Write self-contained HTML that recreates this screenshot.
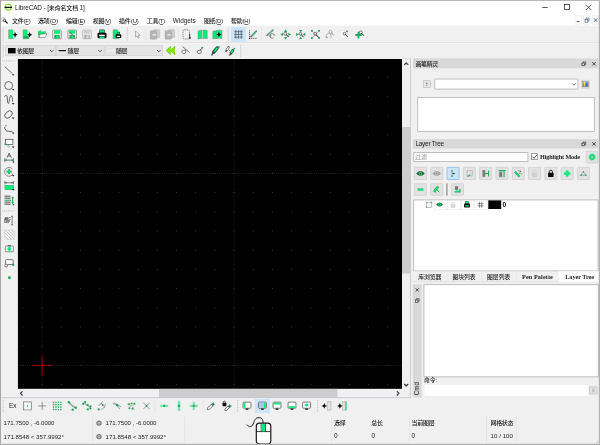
<!DOCTYPE html>
<html lang="zh-CN">
<head>
<meta charset="utf-8">
<title>LibreCAD - [未命名文档 1]</title>
<style>
html,body{margin:0;padding:0;background:#f0f0f0;}
body{width:600px;height:445px;overflow:hidden;}
#w{display:block;width:600px;height:445px;background:#f0f0f0;font-family:"Liberation Sans","Noto Sans CJK SC",sans-serif;font-size:6px;fill:#1c1c1c;filter:blur(0.3px);}
#w svg{overflow:visible;}
#w text{white-space:pre;}
#w .u{text-decoration:underline;text-decoration-thickness:.45px;text-underline-offset:.9px;}
</style>
</head>
<body>
<svg id="w" width="600" height="445" viewBox="0 0 600 445">
<rect x="0" y="0" width="600" height="25.6" fill="#fff"/>
<svg x="4.1" y="3.1" width="8.4" height="8.4" viewBox="0 0 20 20"><path d="M2.6 2.6 L5 5 M17.4 2.6 L15 5 M2.6 17.4 L5 15 M17.4 17.4 L15 15" stroke="#86d02a" stroke-width="1.8"/><circle cx="10" cy="10" r="7.2" fill="#fff" stroke="#86d02a" stroke-width="2.6"/><rect x="1" y="8.7" width="18" height="2.7" rx=".4" fill="#111"/></svg>
<text x="15" y="9.6" font-size="6" font-weight="500" letter-spacing="-0.149"><tspan font-size="6.48">LibreCAD - [</tspan>未命名文档 <tspan font-size="6.48">1]</tspan></text>
<svg x="535" y="0" width="65" height="15" viewBox="535 0 65 15"><path d="M542.3 7.5 H547.7" stroke="#111" stroke-width=".7" fill="none"/><rect x="564.5" y="4.5" width="5" height="5" fill="none" stroke="#111" stroke-width=".7"/><path d="M586 4.8 L591.2 10 M591.2 4.8 L586 10" stroke="#111" stroke-width=".7" fill="none"/></svg>
<svg x="1.8" y="17.6" width="6" height="6" viewBox="0 0 20 20"><rect x="0.5" y="0.5" width="10" height="12" fill="#fff" stroke="#8a8a8a" stroke-width="1.2"/><circle cx="9" cy="9" r="4" fill="#fff" stroke="#222" stroke-width="2.4"/><path d="M12.4 12.4 L18 18" stroke="#111" stroke-width="4" stroke-linecap="round"/></svg>
<text x="12" y="23" font-size="6" font-weight="500" letter-spacing="-0.237">文件<tspan font-size="6">(</tspan><tspan class="u"><tspan font-size="6">F</tspan></tspan><tspan font-size="6">)</tspan></text>
<text x="38" y="23" font-size="6" font-weight="500" letter-spacing="-0.138">选项<tspan font-size="6">(</tspan><tspan class="u"><tspan font-size="6">O</tspan></tspan><tspan font-size="6">)</tspan></text>
<text x="66" y="23" font-size="6" font-weight="500" letter-spacing="-0.206">编辑<tspan font-size="6">(</tspan><tspan class="u"><tspan font-size="6">E</tspan></tspan><tspan font-size="6">)</tspan></text>
<text x="92.8" y="23" font-size="6" font-weight="500" letter-spacing="-0.326">视图<tspan font-size="6">(</tspan><tspan class="u"><tspan font-size="6">V</tspan></tspan><tspan font-size="6">)</tspan></text>
<text x="119" y="23" font-size="6" font-weight="500" letter-spacing="-0.132">插件<tspan font-size="6">(</tspan><tspan class="u"><tspan font-size="6">U</tspan></tspan><tspan font-size="6">)</tspan></text>
<text x="146.8" y="23" font-size="6" font-weight="500" letter-spacing="-0.338">工具<tspan font-size="6">(</tspan><tspan class="u"><tspan font-size="6">T</tspan></tspan><tspan font-size="6">)</tspan></text>
<text x="172.8" y="23.14" font-size="6.4" letter-spacing="-0.013">Widgets</text>
<text x="203.9" y="23" font-size="6" font-weight="500" letter-spacing="-0.272">图纸<tspan font-size="6">(</tspan><tspan class="u"><tspan font-size="6">D</tspan></tspan><tspan font-size="6">)</tspan></text>
<text x="231" y="23" font-size="6" font-weight="500" letter-spacing="-0.232">帮助<tspan font-size="6">(</tspan><tspan class="u"><tspan font-size="6">H</tspan></tspan><tspan font-size="6">)</tspan></text>
<rect x="574.95" y="15.85" width="6.2" height="8.3" fill="#fff" stroke="#e4e4e4" stroke-width="0.5"/>
<rect x="583.45" y="15.85" width="6.5" height="8.3" fill="#fff" stroke="#e4e4e4" stroke-width="0.5"/>
<rect x="592.45" y="15.85" width="6.3" height="8.3" fill="#fff" stroke="#e4e4e4" stroke-width="0.5"/>
<svg x="570" y="14" width="30" height="12" viewBox="570 14 30 12"><path d="M576.6 21.6 H579.6" stroke="#3a4a78" stroke-width=".9"/><rect x="585" y="19.6" width="2.8" height="2.6" fill="#fff" stroke="#3a4a78" stroke-width=".6"/><path d="M586 19.4 V18.2 H589 V21 H588" fill="none" stroke="#3a4a78" stroke-width=".6"/><path d="M594 18.4 L597.2 21.8 M597.2 18.4 L594 21.8" stroke="#3a4a78" stroke-width=".8"/></svg>
<rect x="0" y="42.2" width="600" height="0.7" fill="#dcdcdc"/>
<rect x="0" y="42.9" width="600" height="0.4" fill="#fafafa"/>
<svg x="2.2" y="28" width="2" height="13" viewBox="0 0 2 13"><path d="M1 0 V13" stroke="#a0a0a0" stroke-width=".8" stroke-dasharray=".7 1.1"/></svg>
<rect x="230.9" y="27" width="15.1" height="14.8" fill="#cce4f7"/>
<svg x="7.8" y="29.4" width="10" height="10" viewBox="0 0 20 20"><path d="M1.5 0.8 H9.5 L13 4.5 V18.6 H1.5 Z" fill="#00f07a" stroke="#8a8a8a" stroke-width="1"/><path d="M9.5 0.8 L13 4.5 V18.6 H10.5 V4 Z" fill="#fff" opacity=".85"/><path d="M14.6 5.200000000000001 L16.168 9.232000000000001 L20.2 10.8 L16.168 12.368 L14.6 16.4 L13.032 12.368 L9.0 10.8 L13.032 9.232000000000001 Z" fill="#000"/></svg>
<svg x="22.3" y="29.4" width="10" height="10" viewBox="0 0 20 20"><path d="M1.5 0.8 H9.5 L13 4.5 V18.6 H1.5 Z" fill="#00f07a" stroke="#8a8a8a" stroke-width="1"/><rect x="2" y="13.5" width="10.5" height="4.6" fill="#1fa85a"/><path d="M9.5 0.8 L13 4.5 V13 H10.5 V4 Z" fill="#fff" opacity=".85"/><path d="M14.6 5.200000000000001 L16.168 9.232000000000001 L20.2 10.8 L16.168 12.368 L14.6 16.4 L13.032 12.368 L9.0 10.8 L13.032 9.232000000000001 Z" fill="#000"/></svg>
<svg x="37.5" y="29.4" width="10" height="10" viewBox="0 0 20 20"><path d="M2 3.5 L7 2.5 L9 5 L16 4 L15.5 9 L2.5 11 Z" fill="#00f07a" stroke="#1fa85a" stroke-width=".8"/><path d="M2.5 16.5 L5.5 9.5 L19 8.5 L15 16.5 Z" fill="#fff" stroke="#555" stroke-width="1.1"/><path d="M2.2 4 V16.5" stroke="#1fa85a" stroke-width="1.2"/></svg>
<svg x="52" y="29.4" width="10" height="10" viewBox="0 0 20 20"><rect x="1.5" y="1.5" width="17" height="17" rx="1.2" fill="#f4f4f4" stroke="#6a6a6a" stroke-width="1.3"/><rect x="4" y="2" width="12" height="6.8" fill="#00f07a"/><rect x="4.5" y="11" width="11" height="7.2" fill="#1fa85a"/><rect x="8.5" y="12.2" width="5" height="5" fill="#00f07a"/></svg>
<svg x="67.2" y="29.4" width="10" height="10" viewBox="0 0 20 20"><rect x="1.5" y="1.5" width="17" height="17" rx="1.2" fill="#f4f4f4" stroke="#6a6a6a" stroke-width="1.3"/><rect x="4" y="2" width="12" height="6.8" fill="#00f07a"/><rect x="4.5" y="11" width="11" height="7.2" fill="#1fa85a"/><rect x="8.5" y="12.2" width="5" height="5" fill="#00f07a"/><path d="M5 5 L15 16" stroke="#444" stroke-width="2"/><path d="M6 6 L15 17" stroke="#ddd" stroke-width=".7"/></svg>
<svg x="82" y="29.4" width="10" height="10" viewBox="0 0 20 20"><rect x="1.5" y="1.5" width="17" height="17" rx="1.2" fill="#f2f2f2" stroke="#9c9c9c" stroke-width="1.3"/><rect x="4" y="2" width="12" height="6.8" fill="#d0d0d0"/><rect x="4.5" y="11" width="11" height="7.2" fill="#a8a8a8"/><rect x="8.5" y="12.2" width="5" height="5" fill="#d8d8d8"/></svg>
<svg x="97" y="29.4" width="10" height="10" viewBox="0 0 20 20"><rect x="5.5" y="1" width="9" height="6" fill="#00f07a" stroke="#0a0a0a" stroke-width="1"/><rect x="1" y="6.5" width="18" height="11" rx="2.5" fill="#0a0a0a"/><rect x="4.5" y="10.5" width="11" height="3.2" fill="#fff"/><rect x="5" y="14.6" width="10" height="3.6" fill="#00f07a"/></svg>
<svg x="111.8" y="29.4" width="10" height="10" viewBox="0 0 20 20"><path d="M2.5 0.8 H11 L14.5 4.5 V18.6 H2.5 Z" fill="#00f07a" stroke="#8a8a8a" stroke-width="1"/><rect x="10.5" y="6" width="5.5" height="4" fill="#00f07a" stroke="#0a0a0a" stroke-width=".8"/><rect x="7.5" y="9.5" width="11.5" height="7.5" rx="1.8" fill="#0a0a0a"/><rect x="10" y="12.8" width="6.5" height="2.6" fill="#fff"/></svg>
<svg x="132.3" y="29.4" width="10" height="10" viewBox="0 0 20 20"><path d="M6.5 3 V15.5 L9.5 12.7 L11.8 17.6 L13.6 16.8 L11.4 12 H15.5 Z" fill="#fafafa" stroke="#7c7c7c" stroke-width="1.1" stroke-linejoin="round"/></svg>
<svg x="150" y="29.4" width="10" height="10" viewBox="0 0 20 20"><rect x="7" y="0.5" width="12.5" height="16" rx="1.5" fill="#cfcfcf" stroke="#b4b4b4" stroke-width="1"/><rect x="0.5" y="2.5" width="13" height="17" rx="1.5" fill="#b4b4b4" stroke="#a4a4a4" stroke-width="1"/><rect x="5" y="9.6" width="6.5" height="2.6" fill="#f4f4f4"/></svg>
<svg x="164.8" y="29.4" width="10" height="10" viewBox="0 0 20 20"><rect x="7" y="0.5" width="12.5" height="16" rx="1.5" fill="#cfcfcf" stroke="#b4b4b4" stroke-width="1"/><rect x="0.5" y="2.5" width="13" height="17" rx="1.5" fill="#b4b4b4" stroke="#a4a4a4" stroke-width="1"/><rect x="5" y="9.6" width="6.5" height="2.6" fill="#f4f4f4"/></svg>
<svg x="182" y="29.4" width="10" height="10" viewBox="0 0 20 20"><rect x="2" y="0.8" width="13" height="18.4" rx="3" fill="none" stroke="#444" stroke-width="1.3" stroke-dasharray="2.6 1.8"/><path d="M15.4 9 V17.6" fill="none" stroke="#222" stroke-width="1.5"/><circle cx="15.6" cy="17" r="1.9" fill="#222"/></svg>
<svg x="197.5" y="29.4" width="10" height="10" viewBox="0 0 20 20"><path d="M1 3 Q5 1 9.6 1.6 V18.4 Q5 17.6 1 19 Z" fill="#00f07a" stroke="#808080" stroke-width="1"/><path d="M10.8 1.6 Q15 .8 19.4 2.4 V18.6 Q15 17.4 10.8 18.4 Z" fill="#00f07a" stroke="#808080" stroke-width="1"/><path d="M10.2 1.6 V18.4" stroke="#fff" stroke-width=".9"/></svg>
<svg x="212.3" y="29.4" width="10" height="10" viewBox="0 0 20 20"><path d="M1 4 Q4 2.6 8 3 V18.6 Q4 18 1 19.2 Z" fill="#00f07a" stroke="#808080" stroke-width="1"/><path d="M7.6 2.4 Q13 .6 19.2 2 V18 Q13 17 7.6 18.6 Z" fill="#00f07a" stroke="#808080" stroke-width="1"/><path d="M13.2 4.6 L14.767999999999999 8.632 L18.799999999999997 10.2 L14.767999999999999 11.767999999999999 L13.2 15.799999999999999 L11.632 11.767999999999999 L7.6 10.2 L11.632 8.632 Z" fill="#000"/></svg>
<svg x="233.5" y="29.4" width="10" height="10" viewBox="0 0 20 20"><path d="M4.6 1 V19 M10 1 V19 M15.4 1 V19 M1 4.6 H19 M1 10 H19 M1 15.4 H19" fill="none" stroke="#2c3640" stroke-width="1.1"/></svg>
<svg x="248" y="29.4" width="10" height="10" viewBox="0 0 20 20"><path d="M3 1.5 V18 H18" fill="none" stroke="#222" stroke-width="1.4" stroke-dasharray="2.2 1.6"/><path d="M6 14.5 L16.5 3.5" stroke="#777" stroke-width="3.6" stroke-linecap="round"/><path d="M7.5 13 L16 4" stroke="#00f07a" stroke-width="2" stroke-linecap="round"/><circle cx="3" cy="18" r="1.4" fill="#111"/></svg>
<svg x="265.7" y="29.4" width="10" height="10" viewBox="0 0 20 20"><path d="M2.5 12 L14.5 1.5" stroke="#777" stroke-width="3.2" stroke-linecap="round"/><path d="M4.5 10.2 L13.6 2.4" stroke="#58d890" stroke-width="1.9" stroke-linecap="round"/><circle cx="13" cy="13" r="4.6" fill="none" stroke="#444" stroke-width="1.2" stroke-dasharray="22 7" stroke-dashoffset="-4"/><path d="M6.5 12 L9 14.6 L11 11.6" fill="none" stroke="#444" stroke-width="1.2"/></svg>
<svg x="280.6" y="29.4" width="10" height="10" viewBox="0 0 20 20"><path d="M10 -0.30000000000000027 L13.1 4.97 L6.9 4.97 Z" fill="#1fa85a"/><path d="M10 20.700000000000003 L13.1 15.430000000000001 L6.9 15.430000000000001 Z" fill="#1fa85a"/><path d="M-0.5 10 L4.77 6.9 L4.77 13.1 Z" fill="#1fa85a"/><path d="M20.700000000000003 10 L15.430000000000001 6.9 L15.430000000000001 13.1 Z" fill="#1fa85a"/><circle cx="9.5" cy="8.6" r="3" fill="#fff" stroke="#222" stroke-width="1.2"/><path d="M11.6 10.7 L15.6 14.899999999999999" stroke="#222" stroke-width="1.9" stroke-linecap="round"/></svg>
<svg x="295.7" y="29.4" width="10" height="10" viewBox="0 0 20 20"><path d="M10 6.300000000000001 L13.1 1.0300000000000002 L6.9 1.0300000000000002 Z" fill="#1fa85a"/><path d="M10 14.1 L13.1 19.369999999999997 L6.9 19.369999999999997 Z" fill="#1fa85a"/><path d="M6.1 10 L0.8300000000000001 6.9 L0.8300000000000001 13.1 Z" fill="#1fa85a"/><path d="M13.9 10 L19.17 6.9 L19.17 13.1 Z" fill="#1fa85a"/><circle cx="9.5" cy="9" r="2.8" fill="#fff" stroke="#222" stroke-width="1.2"/><path d="M11.459999999999999 10.959999999999999 L15.459999999999999 15.16" stroke="#222" stroke-width="1.9" stroke-linecap="round"/></svg>
<svg x="310.5" y="29.4" width="10" height="10" viewBox="0 0 20 20"><rect x="1" y="1" width="3.6" height="3.6" fill="#1fa85a"/><rect x="15.4" y="1" width="3.6" height="3.6" fill="#1fa85a"/><rect x="1" y="15.4" width="3.6" height="3.6" fill="#1fa85a"/><rect x="15.4" y="15.4" width="3.6" height="3.6" fill="#1fa85a"/><path d="M4 4 L16 16 M16 4 L4 16" stroke="#555" stroke-width="1"/><circle cx="9.5" cy="9" r="2.8" fill="#fff" stroke="#222" stroke-width="1.2"/><path d="M11.459999999999999 10.959999999999999 L15.459999999999999 15.16" stroke="#222" stroke-width="1.9" stroke-linecap="round"/></svg>
<svg x="325" y="29.4" width="10" height="10" viewBox="0 0 20 20"><path d="M3 17 C1 10 6 6 10 9 C14 12 12 16 11 17" fill="none" stroke="#8c8c8c" stroke-width="1.3"/><path d="M1.5 14 L3.2 17.5 L6.4 15.5" fill="none" stroke="#8c8c8c" stroke-width="1.2"/><circle cx="11" cy="5" r="3" fill="#fff" stroke="#7c7c7c" stroke-width="1.2"/><path d="M13.1 7.1 L17.1 11.3" stroke="#7c7c7c" stroke-width="1.9" stroke-linecap="round"/></svg>
<svg x="340" y="29.4" width="10" height="10" viewBox="0 0 20 20"><rect x="1" y="2.5" width="14" height="15" fill="#fff" stroke="#dcdcdc" stroke-width=".8"/><circle cx="9" cy="8.5" r="2.8" fill="#fff" stroke="#222" stroke-width="1.2"/><path d="M10.959999999999999 10.459999999999999 L14.959999999999999 14.66" stroke="#222" stroke-width="1.9" stroke-linecap="round"/><path d="M14 2 V6 M12 4 H16" stroke="#333" stroke-width="1.1"/></svg>
<svg x="355" y="29.4" width="10" height="10" viewBox="0 0 20 20"><path d="M7 4.5 V18 M0.5 11.2 H13.5" stroke="#1fa85a" stroke-width="3.6"/><circle cx="11.5" cy="6" r="2.8" fill="#fff" stroke="#222" stroke-width="1.2"/><path d="M13.459999999999999 7.96 L17.46 12.16" stroke="#222" stroke-width="1.9" stroke-linecap="round"/></svg>
<svg x="126.2" y="28" width="2" height="13" viewBox="0 0 2 13"><path d="M1 0 V13" stroke="#a0a0a0" stroke-width=".8" stroke-dasharray=".7 1.1"/></svg>
<rect x="145.7" y="28" width="0.6" height="13" fill="#dedede"/>
<rect x="177.9" y="28" width="0.6" height="13" fill="#dedede"/>
<svg x="227.2" y="28" width="2" height="13" viewBox="0 0 2 13"><path d="M1 0 V13" stroke="#a0a0a0" stroke-width=".8" stroke-dasharray=".7 1.1"/></svg>
<rect x="261.3" y="28" width="0.6" height="13" fill="#dedede"/>
<svg x="2.2" y="45" width="2" height="11.5" viewBox="0 0 2 11.5"><path d="M1 0 V11.5" stroke="#a0a0a0" stroke-width=".8" stroke-dasharray=".7 1.1"/></svg>
<rect x="5.75" y="45.75" width="50" height="10.1" fill="#e4e4e4" stroke="#c6c6c6" stroke-width="0.5"/>
<svg x="50" y="50" width="3.6" height="1.8" viewBox="0 0 3.6 1.8"><path d="M0 0 L1.8 1.8 L3.6 0" fill="none" stroke="#333" stroke-width=".8"/></svg>
<rect x="56.65" y="45.75" width="47.4" height="10.1" fill="#e4e4e4" stroke="#c6c6c6" stroke-width="0.5"/>
<svg x="98.3" y="50" width="3.6" height="1.8" viewBox="0 0 3.6 1.8"><path d="M0 0 L1.8 1.8 L3.6 0" fill="none" stroke="#333" stroke-width=".8"/></svg>
<rect x="104.95" y="45.75" width="57.8" height="10.1" fill="#e4e4e4" stroke="#c6c6c6" stroke-width="0.5"/>
<svg x="157" y="50" width="3.6" height="1.8" viewBox="0 0 3.6 1.8"><path d="M0 0 L1.8 1.8 L3.6 0" fill="none" stroke="#333" stroke-width=".8"/></svg>
<rect x="8" y="48" width="7.6" height="5.4" fill="#000"/>
<text x="17" y="52.7" font-size="6" font-weight="500" letter-spacing="-0.339">依图层</text>
<rect x="58.6" y="50" width="7.4" height="1.2" fill="#111"/>
<text x="67.6" y="52.7" font-size="6" font-weight="500" letter-spacing="-0.408">随层</text>
<rect x="107" y="50.3" width="7.4" height="0.6" fill="#fcfcfc"/>
<text x="116" y="52.7" font-size="6" font-weight="500" letter-spacing="-0.408">随层</text>
<svg x="165.5" y="45.6" width="10" height="10" viewBox="0 0 20 20"><path d="M10.5 1.5 L1 10 L10.5 18.5 L8.6 10 Z" fill="#86e600" stroke="#4aa800" stroke-width=".9" stroke-linejoin="round"/><path d="M19 1.5 L9.5 10 L19 18.5 L17.1 10 Z" fill="#86e600" stroke="#4aa800" stroke-width=".9" stroke-linejoin="round"/><path d="M10 3.5 L3 10 L10 16.5 Z M18.5 3.5 L11.5 10 L18.5 16.5 Z" fill="#86e600"/></svg>
<svg x="180.6" y="45.6" width="10" height="10" viewBox="0 0 20 20"><path d="M4 2 L18 14" stroke="#333" stroke-width="1.3"/><path d="M2 13 Q2 10 6 9.5 L10 9 Q11.5 13 9 15.5 Q4 17.5 2 13 Z" fill="#fff" stroke="#333" stroke-width="1.3"/></svg>
<svg x="195" y="45.6" width="10" height="10" viewBox="0 0 20 20"><path d="M4 13 Q4 10 8 9.5 L12 9 Q13.5 13 11 15.5 Q6 17.5 4 13 Z" fill="#fff" stroke="#333" stroke-width="1.3"/><path d="M10.5 9 L13 6" stroke="#333" stroke-width="2"/><circle cx="14.4" cy="4.4" r="2" fill="#1fa85a"/></svg>
<svg x="210.3" y="45.6" width="10" height="10" viewBox="0 0 20 20"><path d="M3 18.5 L7.5 12" stroke="#4a4a4a" stroke-width="3" stroke-linecap="round"/><path d="M7 13 L13.5 5" stroke="#3c3c3c" stroke-width="6.6" stroke-linecap="round"/><path d="M9 10.8 L13 5.8" stroke="#00f07a" stroke-width="4" stroke-linecap="round"/><circle cx="17.2" cy="2.6" r="1.9" fill="#1fa85a"/></svg>
<svg x="225.2" y="45.6" width="10" height="10" viewBox="0 0 20 20"><path d="M1.5 12 L3 9" stroke="#555" stroke-width="2.4" stroke-linecap="round"/><path d="M3 9 L6.5 3.5" stroke="#555" stroke-width="5" stroke-linecap="round"/><path d="M3.8 8 L6.2 4.2" stroke="#fff" stroke-width="2.6" stroke-linecap="round"/><path d="M9 19 L11.5 15" stroke="#4a4a4a" stroke-width="2.6" stroke-linecap="round"/><path d="M11.5 15 L15.5 9.5" stroke="#4a4a4a" stroke-width="5.4" stroke-linecap="round"/><path d="M12.6 13.4 L15 10.2" stroke="#00f07a" stroke-width="3" stroke-linecap="round"/><circle cx="18" cy="6" r="1.8" fill="#1fa85a"/><path d="M7 8 L10 11" stroke="#555" stroke-width="1.3"/></svg>
<svg x="239.7" y="45" width="2" height="11.5" viewBox="0 0 2 11.5"><path d="M1 0 V11.5" stroke="#a0a0a0" stroke-width=".8" stroke-dasharray=".7 1.1"/></svg>
<svg x="2.5" y="60" width="13" height="2" viewBox="0 0 13 2"><path d="M0 1 H13" stroke="#a0a0a0" stroke-width=".8" stroke-dasharray=".7 1.1"/></svg>
<svg x="4" y="65.8" width="10.8" height="10.8" viewBox="0 0 20 20"><path d="M1.5 1.5 L15.5 14.5" stroke="#333" stroke-width="1.3"/><path d="M14.6 15.6 H19.4 L17 18.6 Z" fill="#222"/></svg>
<svg x="4" y="80.5" width="10.8" height="10.8" viewBox="0 0 20 20"><circle cx="8.6" cy="9.4" r="7.4" fill="none" stroke="#333" stroke-width="1.3"/><path d="M14.6 15.6 H19.4 L17 18.6 Z" fill="#222"/></svg>
<svg x="4" y="94.6" width="10.8" height="10.8" viewBox="0 0 20 20"><path d="M1 4.5 C2 0.5 5.5 0 6 4 C6.5 9 6 16 8 16.5 C10 17 10 4 12 2 C14.5 0 15.5 6 16 13" fill="none" stroke="#3c3c3c" stroke-width="1.4"/><path d="M14.6 15.6 H19.4 L17 18.6 Z" fill="#222"/></svg>
<svg x="4" y="109.1" width="10.8" height="10.8" viewBox="0 0 20 20"><ellipse cx="8.4" cy="10" rx="8" ry="5.4" transform="rotate(-42 8.4 10)" fill="none" stroke="#333" stroke-width="1.3"/><path d="M14.6 15.6 H19.4 L17 18.6 Z" fill="#222"/></svg>
<svg x="4" y="124" width="10.8" height="10.8" viewBox="0 0 20 20"><path d="M3.5 2 V4.6 M1.5 5.5 C1 10 4 13.6 8 13.6 H15.5" fill="none" stroke="#444" stroke-width="1.5"/><path d="M14.6 15.6 H19.4 L17 18.6 Z" fill="#222"/></svg>
<svg x="4" y="138.2" width="10.8" height="10.8" viewBox="0 0 20 20"><rect x="2.5" y="2" width="14" height="9.4" fill="#fff" stroke="#444" stroke-width="1.3"/><circle cx="2.6" cy="11.4" r="2" fill="#1fa85a"/><path d="M5 13.4 L9.5 17.6 M7.4 12.8 L11 16" stroke="#777" stroke-width="1"/><path d="M14.6 15.6 H19.4 L17 18.6 Z" fill="#222"/></svg>
<svg x="4" y="152.3" width="10.8" height="10.8" viewBox="0 0 20 20"><path d="M1.5 14.5 H17.5 M1.5 11 V18 M17.5 11 V18" stroke="#333" stroke-width="1.2"/><path d="M5.6 10 L9.5 1.5 L13.4 10 M7.2 7 H11.8" fill="none" stroke="#333" stroke-width="1.3"/><path d="M1.8 14.5 L5.4 12.6 V16.4 Z M17.2 14.5 L13.6 12.6 V16.4 Z" fill="#1fa85a"/><path d="M15.4 17.4 H19.6 L17.5 20 Z" fill="#222"/></svg>
<svg x="4" y="166.5" width="10.8" height="10.8" viewBox="0 0 20 20"><path d="M15.5 4.5 A8.2 8.2 0 1 0 17 13" fill="none" stroke="#555" stroke-width="1.2"/><path d="M9.5 4.6 V14.4 M4.6 9.5 H14.4" stroke="#1fa85a" stroke-width="3"/><path d="M9.5 5.6 V13.4 M5.6 9.5 H13.4" stroke="#00f07a" stroke-width="1.2"/><path d="M14.6 15.6 H19.4 L17 18.6 Z" fill="#222"/></svg>
<svg x="4" y="180.6" width="10.8" height="10.8" viewBox="0 0 20 20"><path d="M1.5 4 H17.5 M1.5 1 V7 M17.5 1 V7" stroke="#444" stroke-width="1.2"/><path d="M2 4 L5 2.6 V5.4 Z M17 4 L14 2.6 V5.4 Z" fill="#444"/><rect x="1.8" y="9.2" width="15.6" height="7.6" fill="#00f07a" stroke="#1fa85a" stroke-width="1.1"/><path d="M14.6 15.6 H19.4 L17 18.6 Z" fill="#222"/></svg>
<svg x="4" y="194.8" width="10.8" height="10.8" viewBox="0 0 20 20"><path d="M1 2.5 H12 M1 6.2 H12 M1 13.6 H12 M1 17.4 H12" stroke="#333" stroke-width="1.6"/><path d="M1 10 H13" stroke="#1fa85a" stroke-width="2"/><path d="M16 5 V15" stroke="#1fa85a" stroke-width="2"/><path d="M13.4 6.4 L16 2.6 L18.6 6.4 Z M13.4 13.6 L16 17.4 L18.6 13.6 Z" fill="#1fa85a"/><path d="M15.4 17.6 H19.6 L17.5 20 Z" fill="#222"/></svg>
<svg x="4" y="215.2" width="10.8" height="10.8" viewBox="0 0 20 20"><path d="M15 2 V18 M13 2 H17 M13 18 H17" stroke="#444" stroke-width="1.2"/></svg>
<svg x="4" y="229.4" width="10.8" height="10.8" viewBox="0 0 20 20"><rect x="1" y="1" width="18" height="18" fill="#fafafa" stroke="#d4d4d4" stroke-width="1"/><path d="M1 6 L14 19 M1 12 L8 19 M2 1 L19 18 M8 1 L19 12 M14 1 L19 6" stroke="#9a9a9a" stroke-width="1.3"/></svg>
<svg x="4" y="243.1" width="10.8" height="10.8" viewBox="0 0 20 20"><rect x="2.5" y="5.5" width="15" height="10.5" rx="1" fill="#f4f4f4" stroke="#6a6a6a" stroke-width="1.3"/><rect x="7" y="3.4" width="6" height="2.6" fill="#6a6a6a"/><circle cx="10" cy="10.8" r="3.6" fill="#00f07a"/></svg>
<svg x="4" y="258" width="10.8" height="10.8" viewBox="0 0 20 20"><path d="M3 12 V4.5 Q3 3 4.5 3 H15.5 Q17 3 17 4.5 V12 H6" fill="#fff" stroke="#444" stroke-width="1.3"/><circle cx="4" cy="14" r="2.6" fill="#fff" stroke="#444" stroke-width="1.2"/><circle cx="17" cy="12.5" r="2.2" fill="#1fa85a"/></svg>
<svg x="4" y="272.4" width="10.8" height="10.8" viewBox="0 0 20 20"><circle cx="10" cy="10" r="2.7" fill="#1fa85a"/></svg>
<text x="4.2" y="219.65" font-size="3" fill="#333" font-weight="bold">ABC</text>
<text x="4.2" y="223.45" font-size="3" fill="#333" font-weight="bold">DEF</text>
<svg x="2.5" y="209.9" width="13" height="2" viewBox="0 0 13 2"><path d="M0 1 H13" stroke="#a0a0a0" stroke-width=".8" stroke-dasharray=".7 1.1"/></svg>
<rect x="17.8" y="59" width="384.2" height="329.9" fill="#000"/>
<svg x="17.8" y="59" width="384.2" height="329.9" viewBox="0 0 384.2 329.9" style="overflow:hidden"><path d="M24.3 0 V329.9" stroke="#4c4c4c" stroke-width=".6" stroke-dasharray=".6 1.3" fill="none"/><path d="M216.3 0 V329.9" stroke="#4c4c4c" stroke-width=".6" stroke-dasharray=".6 1.3" fill="none"/><path d="M0 306.4 H384.2" stroke="#4c4c4c" stroke-width=".6" stroke-dasharray=".6 1.3" fill="none"/><path d="M0 114.4 H384.2" stroke="#4c4c4c" stroke-width=".6" stroke-dasharray=".6 1.3" fill="none"/><path d="M4.7 18.4H384.2M4.7 37.6H384.2M4.7 56.8H384.2M4.7 76H384.2M4.7 95.2H384.2M4.7 114.4H384.2M4.7 133.6H384.2M4.7 152.8H384.2M4.7 172H384.2M4.7 191.2H384.2M4.7 210.4H384.2M4.7 229.6H384.2M4.7 248.8H384.2M4.7 268H384.2M4.7 287.2H384.2M4.7 306.4H384.2M4.7 325.6H384.2" stroke="#505050" stroke-width=".8" stroke-dasharray=".8 18.4" fill="none"/><path d="M14.3 306.4 H34.3 M24.3 296.4 V316.4" stroke="#b80000" stroke-width=".85" fill="none"/></svg>
<rect x="402" y="59" width="8.2" height="330" fill="#f0f0f0"/>
<rect x="402" y="127" width="8.2" height="146.5" fill="#cdcdcd"/>
<rect x="17.8" y="388.9" width="392.4" height="8.7" fill="#f0f0f0"/>
<rect x="159" y="388.9" width="178.5" height="8.7" fill="#cdcdcd"/>
<svg x="400" y="58" width="12" height="340" viewBox="400 58 12 340"><path d="M404.5 64.6 L406.2 62.9 L407.9 64.6" fill="none" stroke="#3a3a3a" stroke-width="1.25" stroke-linecap="round" stroke-linejoin="round"/><path d="M404.5 384.3 L406.2 386 L407.9 384.3" fill="none" stroke="#3a3a3a" stroke-width="1.25" stroke-linecap="round" stroke-linejoin="round"/></svg>
<svg x="17" y="388" width="386" height="10" viewBox="17 388 386 10"><path d="M22.2 391.6 L20.5 393.3 L22.2 395" fill="none" stroke="#3a3a3a" stroke-width="1.25" stroke-linecap="round" stroke-linejoin="round"/><path d="M397.2 391.6 L398.9 393.3 L397.2 395" fill="none" stroke="#3a3a3a" stroke-width="1.25" stroke-linecap="round" stroke-linejoin="round"/></svg>
<rect x="410.1" y="58.6" width="0.7" height="339.4" fill="#bcbfc8"/>
<rect x="402" y="58.5" width="8.8" height="0.5" fill="#d4d4d4"/>
<rect x="0.6" y="397.4" width="410.2" height="0.7" fill="#bcbfc8"/>
<rect x="17.3" y="59" width="0.5" height="338.6" fill="#fdfdfd"/>
<rect x="413" y="58.4" width="185.6" height="9.9" fill="#d8d8d8"/>
<text x="415.4" y="65.8" font-size="6" font-weight="500" letter-spacing="-0.354">画笔精灵</text>
<svg x="578" y="59" width="22" height="10" viewBox="578 59 22 10"><rect x="581.9" y="63.1" width="2.6" height="2.6" fill="none" stroke="#222" stroke-width=".6"/><path d="M583 62.9 V61.9 H585.7 V64.6 H584.7" fill="none" stroke="#222" stroke-width=".6"/><path d="M592.3 62.1 L595.7 65.5 M595.7 62.1 L592.3 65.5" stroke="#222" stroke-width=".8" fill="none"/></svg>
<rect x="423.3" y="80.7" width="7" height="6.9" fill="#e4e4e4" stroke="#b8b8b8" stroke-width="0.6"/>
<svg x="423" y="80.4" width="7.6" height="7.5" viewBox="0 0 7.6 7.5"><path d="M3.1 2.9 H4.5 M3.8 2.2 V3.6 M3 4.8 H4.6" stroke="#666" stroke-width=".6"/></svg>
<rect x="434.75" y="79.05" width="143.2" height="10" fill="#fff" stroke="#a6a6a6" stroke-width="0.7" rx="0.6"/>
<svg x="572" y="83.4" width="3.6" height="1.8" viewBox="0 0 3.6 1.8"><path d="M0 0 L1.8 1.8 L3.6 0" fill="none" stroke="#444" stroke-width=".8"/></svg>
<svg x="581.4" y="80.1" width="8.2" height="8.2" viewBox="0 0 20 20"><defs><linearGradient id="rb" x1="0" y1="0" x2="1" y2="0"><stop offset="0" stop-color="#f03030"/><stop offset=".3" stop-color="#f0e020"/><stop offset=".5" stop-color="#20d040"/><stop offset=".72" stop-color="#2060f0"/><stop offset="1" stop-color="#e030d0"/></linearGradient><linearGradient id="rv" x1="0" y1="0" x2="0" y2="1"><stop offset="0" stop-color="#fff" stop-opacity=".35"/><stop offset=".5" stop-color="#fff" stop-opacity="0"/><stop offset="1" stop-color="#002" stop-opacity=".45"/></linearGradient></defs><rect x="0" y="0" width="20" height="20" fill="#e4e4e4" stroke="#c4c4c4" stroke-width="1"/><rect x="2.4" y="3.4" width="15.2" height="13.2" fill="#fff" stroke="#6a6a6a" stroke-width="1.1"/><rect x="3.6" y="4.6" width="12.8" height="10.8" fill="url(#rb)"/><rect x="3.6" y="4.6" width="12.8" height="10.8" fill="url(#rv)"/></svg>
<rect x="417.75" y="97.55" width="176.8" height="33.9" fill="#fff" stroke="#a8a8a8" stroke-width="0.7"/>
<rect x="413" y="139.2" width="185.6" height="9.3" fill="#d8d8d8"/>
<text x="415.4" y="146.04" font-size="6.4" letter-spacing="-0.196">Layer Tree</text>
<svg x="578" y="139" width="22" height="10" viewBox="578 139 22 10"><rect x="581.9" y="143.2" width="2.6" height="2.6" fill="none" stroke="#222" stroke-width=".6"/><path d="M583 143 V142 H585.7 V144.7 H584.7" fill="none" stroke="#222" stroke-width=".6"/><path d="M592.3 142.2 L595.7 145.6 M595.7 142.2 L592.3 145.6" stroke="#222" stroke-width=".8" fill="none"/></svg>
<rect x="413.75" y="152.65" width="114.2" height="8.7" fill="#fff" stroke="#a8a8a8" stroke-width="0.7"/>
<text x="415" y="159.1" font-size="6" fill="#a8a8a8" font-weight="500" letter-spacing="-0.108">过滤</text>
<rect x="531.6" y="153.7" width="6" height="6" fill="#fff" stroke="#6a6a6a" stroke-width="0.6"/>
<svg x="531.3" y="153.4" width="6.6" height="6.6" viewBox="0 0 6.6 6.6"><path d="M1.2 3.3 L2.8 5 L5.6 1.4" fill="none" stroke="#222" stroke-width=".8"/></svg>
<text x="540" y="159.07" font-size="6.2" fill="#222" font-family='"Liberation Serif","Noto Serif CJK SC",serif' font-weight="bold" letter-spacing="-0.127">Highlight Mode</text>
<rect x="586.2" y="151.3" width="11.5" height="11.7" fill="#e2e2e2" stroke="#c8c8c8" stroke-width="0.6" rx="0.5"/>
<svg x="588.1" y="153.1" width="8" height="8" viewBox="0 0 20 20"><circle cx="10" cy="10" r="7.6" fill="#1edc7c"/><circle cx="10" cy="10" r="8.2" fill="none" stroke="#1edc7c" stroke-width="1.8" stroke-dasharray="3.2 3.24"/><circle cx="10" cy="10" r="2" fill="#f2d4e0"/></svg>
<rect x="414.4" y="167.4" width="12.1" height="12.1" fill="#e2e2e2" stroke="#c8c8c8" stroke-width="0.6" rx="0.5"/>
<svg x="416.25" y="169.3" width="8.4" height="8.4" viewBox="0 0 20 20"><path d="M1 10 C5 4 15 4 19 10 C15 16 5 16 1 10 Z" fill="#127a40" stroke="#0a3a1e" stroke-width="1.2"/><circle cx="10" cy="10" r="3.9" fill="#00f07a"/><circle cx="10" cy="10" r="2" fill="#0a3a1e"/></svg>
<rect x="430.7" y="167.4" width="12.1" height="12.1" fill="#e2e2e2" stroke="#c8c8c8" stroke-width="0.6" rx="0.5"/>
<svg x="432.55" y="169.3" width="8.4" height="8.4" viewBox="0 0 20 20"><path d="M1 10 C5 4 15 4 19 10 C15 16 5 16 1 10 Z" fill="#a4a4a4" stroke="#8e8e8e" stroke-width="1.2"/><circle cx="10" cy="10" r="3.9" fill="#c4c4c4"/><circle cx="10" cy="10" r="2" fill="#8e8e8e"/></svg>
<rect x="447" y="167.4" width="12.1" height="12.1" fill="#cce4f7" stroke="#6aaee6" stroke-width="0.6" rx="0.5"/>
<svg x="448.85" y="169.3" width="8.4" height="8.4" viewBox="0 0 20 20"><path d="M7.5 4 V16 M7.5 10 H11" stroke="#444" stroke-width="1.1"/><path d="M4.6 2 H10.4 L7.5 6.4 Z M4.6 18 H10.4 L7.5 13.6 Z" fill="#1fa85a"/><path d="M10.6 7.4 L15 10 L10.6 12.6 Z" fill="#222"/></svg>
<rect x="463.3" y="167.4" width="12.1" height="12.1" fill="#e2e2e2" stroke="#c8c8c8" stroke-width="0.6" rx="0.5"/>
<svg x="465.15" y="169.3" width="8.4" height="8.4" viewBox="0 0 20 20"><rect x="4.5" y="3" width="12.5" height="12.5" fill="none" stroke="#666" stroke-width="1.1" stroke-dasharray="2.2 1.4"/><path d="M3 17.5 L13 10.5 L10.5 16.5 Z" fill="#1fa85a"/></svg>
<rect x="479.6" y="167.4" width="12.1" height="12.1" fill="#e2e2e2" stroke="#c8c8c8" stroke-width="0.6" rx="0.5"/>
<svg x="481.45" y="169.3" width="8.4" height="8.4" viewBox="0 0 20 20"><rect x="2.5" y="1.5" width="6.5" height="17" fill="#8c8c8c"/><path d="M2.5 5 H9 M2.5 8.4 H9 M2.5 11.8 H9 M2.5 15.2 H9" stroke="#5a5a5a" stroke-width="1"/><path d="M6 10 H17 M17 3 V17" stroke="#1fa85a" stroke-width="2.4"/></svg>
<rect x="495.9" y="167.4" width="12.1" height="12.1" fill="#e2e2e2" stroke="#c8c8c8" stroke-width="0.6" rx="0.5"/>
<svg x="497.75" y="169.3" width="8.4" height="8.4" viewBox="0 0 20 20"><path d="M2 3.2 H18.5" stroke="#1fa85a" stroke-width="3.2"/><rect x="3.5" y="6" width="7" height="13" fill="#8c8c8c"/><path d="M15 5 V19" stroke="#1fa85a" stroke-width="2.6"/><path d="M3.5 9 H10.5 M3.5 12.2 H10.5 M3.5 15.4 H10.5" stroke="#5a5a5a" stroke-width="1"/></svg>
<rect x="512.2" y="167.4" width="12.1" height="12.1" fill="#e2e2e2" stroke="#c8c8c8" stroke-width="0.6" rx="0.5"/>
<svg x="514.05" y="169.3" width="8.4" height="8.4" viewBox="0 0 20 20"><path d="M3.5 7 L11.5 16" stroke="#1fa85a" stroke-width="5" stroke-linecap="round"/><path d="M4 7.5 L11 15.4" stroke="#00f07a" stroke-width="2.8" stroke-linecap="round"/><path d="M10 2.5 L12 5 M14.5 3 L15.5 6.5 M16 9 L18 11 M12.5 8 L14 10.5" stroke="#333" stroke-width="1.6"/></svg>
<rect x="528.5" y="167.4" width="12.1" height="12.1" fill="#e2e2e2" stroke="#c8c8c8" stroke-width="0.6" rx="0.5"/>
<svg x="530.35" y="169.3" width="8.4" height="8.4" viewBox="0 0 20 20"><rect x="3.5" y="8.5" width="13" height="10" rx="1.2" fill="#d0d0d0"/><path d="M6.2 9 V6 A3.8 3.8 0 0 1 13.8 6 V9" fill="none" stroke="#d0d0d0" stroke-width="2"/></svg>
<rect x="544.8" y="167.4" width="12.1" height="12.1" fill="#e2e2e2" stroke="#c8c8c8" stroke-width="0.6" rx="0.5"/>
<svg x="546.65" y="169.3" width="8.4" height="8.4" viewBox="0 0 20 20"><rect x="3.5" y="8.5" width="13" height="10" rx="1.2" fill="#0a0a0a"/><path d="M6.2 9 V6 A3.8 3.8 0 0 1 13.8 6 V9" fill="none" stroke="#0a0a0a" stroke-width="2"/></svg>
<rect x="561.1" y="167.4" width="12.1" height="12.1" fill="#e2e2e2" stroke="#c8c8c8" stroke-width="0.6" rx="0.5"/>
<svg x="562.95" y="169.3" width="8.4" height="8.4" viewBox="0 0 20 20"><path d="M10 5.4 V14.6 M5.4 10 H14.6" stroke="#1fa85a" stroke-width="7" stroke-linecap="round" opacity=".3"/><path d="M10 5.4 V14.6 M5.4 10 H14.6" stroke="#00f07a" stroke-width="6" stroke-linecap="round"/></svg>
<rect x="577.4" y="167.4" width="12.1" height="12.1" fill="#e2e2e2" stroke="#c8c8c8" stroke-width="0.6" rx="0.5"/>
<svg x="579.25" y="169.3" width="8.4" height="8.4" viewBox="0 0 20 20"><path d="M10 6 L4 14 M10 6 L16 14 M2 14 H18" stroke="#555" stroke-width="1" fill="none"/><circle cx="10" cy="5.6" r="1.7" fill="#1fa85a"/><circle cx="4.6" cy="14" r="1.7" fill="#1fa85a"/><circle cx="15.4" cy="14" r="1.7" fill="#1fa85a"/></svg>
<rect x="414.4" y="183.7" width="12.1" height="11.6" fill="#e2e2e2" stroke="#c8c8c8" stroke-width="0.6" rx="0.5"/>
<svg x="416.25" y="185.3" width="8.4" height="8.4" viewBox="0 0 20 20"><rect x="3.4" y="7.4" width="13.2" height="5.2" rx="1.6" fill="#00f07a" stroke="#1fa85a" stroke-width=".9"/></svg>
<rect x="430.7" y="183.7" width="12.1" height="11.6" fill="#e2e2e2" stroke="#c8c8c8" stroke-width="0.6" rx="0.5"/>
<svg x="432.55" y="185.3" width="8.4" height="8.4" viewBox="0 0 20 20"><path d="M5 13 L12 5" stroke="#1fa85a" stroke-width="6" stroke-linecap="round"/><path d="M5.4 12.4 L11.6 5.6" stroke="#00f07a" stroke-width="3.6" stroke-linecap="round"/><path d="M10.5 11 L15.5 16" stroke="#1fa85a" stroke-width="2.2" stroke-linecap="round"/><path d="M4 16.5 H9" stroke="#1fa85a" stroke-width="1.4"/></svg>
<rect x="446.2" y="183.4" width="1.4" height="12.2" fill="#9a9a9a"/>
<rect x="451.5" y="183.7" width="12" height="11.6" fill="#e2e2e2" stroke="#c8c8c8" stroke-width="0.6" rx="0.5"/>
<svg x="453.3" y="185.3" width="8.4" height="8.4" viewBox="0 0 20 20"><rect x="4" y="2" width="7.5" height="9.5" fill="#8c8c8c"/><path d="M4 4.6 H11.5 M4 7.6 H11.5" stroke="#5a5a5a" stroke-width="1"/><path d="M3 15.5 H16 V9" fill="none" stroke="#1fa85a" stroke-width="2.8"/><rect x="6" y="12" width="6" height="3" fill="#00f07a"/></svg>
<rect x="413.75" y="199.95" width="184.3" height="71" fill="#fff" stroke="#a8a8a8" stroke-width="0.7"/>
<svg x="425" y="200.6" width="8" height="8" viewBox="0 0 20 20"><rect x="4" y="4" width="12.5" height="12.5" fill="#fff" stroke="#666" stroke-width="1.1"/><circle cx="4" cy="16.5" r="1.5" fill="#1fa85a"/><circle cx="16.5" cy="4" r="1.5" fill="#1fa85a"/></svg>
<rect x="434.8" y="200.4" width="12.4" height="8.8" fill="#fff" stroke="#e0e0e0" stroke-width="0.4"/>
<rect x="447.6" y="200.4" width="13.2" height="8.8" fill="#fff" stroke="#e0e0e0" stroke-width="0.4"/>
<rect x="461.2" y="200.4" width="12.6" height="8.8" fill="#fff" stroke="#e0e0e0" stroke-width="0.4"/>
<rect x="474.2" y="200.4" width="13.1" height="8.8" fill="#fff" stroke="#e0e0e0" stroke-width="0.4"/>
<svg x="436" y="201.1" width="7" height="7" viewBox="0 0 20 20"><path d="M1 10 C5 4 15 4 19 10 C15 16 5 16 1 10 Z" fill="#127a40" stroke="#0a3a1e" stroke-width="1.2"/><circle cx="10" cy="10" r="3.9" fill="#00f07a"/><circle cx="10" cy="10" r="2" fill="#0a3a1e"/></svg>
<svg x="449.5" y="201.3" width="7" height="7" viewBox="0 0 20 20"><rect x="3.5" y="8.5" width="13" height="10" rx="1.2" fill="#cfcfcf"/><path d="M6.2 9 V6 A3.8 3.8 0 0 1 13.8 6 V9" fill="none" stroke="#cfcfcf" stroke-width="2"/><path d="M6 12 H14 M6 15 H14" stroke="#e8e8e8" stroke-width="1"/></svg>
<svg x="463.3" y="200.9" width="7.4" height="7.4" viewBox="0 0 20 20"><rect x="5.5" y="2" width="9" height="6" fill="#00f07a" stroke="#0a0a0a" stroke-width="1"/><rect x="2" y="7" width="16" height="10.5" rx="2.5" fill="#0a0a0a"/><rect x="5.5" y="11.5" width="9" height="3.6" fill="#00f07a"/></svg>
<svg x="476.9" y="201.1" width="7.4" height="7.4" viewBox="0 0 20 20"><path d="M7 2 V18 M13 2 V18 M2 7 H18 M2 13 H18" stroke="#5a5a5a" stroke-width="1.8"/></svg>
<rect x="488.3" y="200.4" width="12.9" height="8.6" fill="#000"/>
<text x="502.4" y="207.21" font-size="6.6" fill="#000" font-weight="bold">0</text>
<rect x="413" y="271.6" width="185.6" height="10.4" fill="#f0f0f0"/>
<rect x="413" y="281.5" width="185.6" height="0.6" fill="#dadada"/>
<rect x="558.9" y="271.4" width="39.7" height="10.5" fill="#fff"/>
<rect x="446.95" y="272.5" width="0.5" height="8.5" fill="#e4e4e4"/>
<rect x="481.75" y="272.5" width="0.5" height="8.5" fill="#e4e4e4"/>
<rect x="516.35" y="272.5" width="0.5" height="8.5" fill="#e4e4e4"/>
<text x="418.2" y="278.83" font-size="5.8" fill="#222" font-weight="500" letter-spacing="-0.051">库浏览器</text>
<text x="452.6" y="278.83" font-size="5.8" fill="#222" font-weight="500" letter-spacing="-0.051">图块列表</text>
<text x="486.9" y="278.83" font-size="5.8" fill="#222" font-weight="500" letter-spacing="0.099">图层列表</text>
<text x="522" y="278.97" font-size="6.2" fill="#222" font-family='"Liberation Serif","Noto Serif CJK SC",serif' font-weight="bold" letter-spacing="0.115">Pen Palette</text>
<text x="565.2" y="278.97" font-size="6.2" fill="#222" font-family='"Liberation Serif","Noto Serif CJK SC",serif' font-weight="bold" letter-spacing="-0.014">Layer Tree</text>
<rect x="412.8" y="284.4" width="8.8" height="113" fill="#d8d8d8"/>
<svg x="412" y="284" width="10" height="22" viewBox="412 284 10 22"><path d="M415.7 288.4 L418.7 291.4 M418.7 288.4 L415.7 291.4" stroke="#222" stroke-width=".8" fill="none"/><rect x="415.3" y="299.9" width="2.6" height="2.6" fill="none" stroke="#222" stroke-width=".6"/><path d="M416.4 299.7 V298.7 H419.1 V301.4 H418.1" fill="none" stroke="#222" stroke-width=".6"/></svg>
<text x="419.5" y="395.2" font-size="6.3" transform="rotate(-90 419.5 395.2)">Cmd</text>
<rect x="423.95" y="284.75" width="174.3" height="92.1" fill="#fff" stroke="#a4a4a4" stroke-width="0.7"/>
<text x="424" y="381.93" font-size="5.8" font-weight="500" letter-spacing="0.047">命令<tspan font-size="6.26">:</tspan></text>
<rect x="424.6" y="385" width="163.6" height="10.8" fill="#fff"/>
<rect x="589.6" y="386.9" width="7.5" height="7" fill="#e3e3e3" stroke="#b8b8b8" stroke-width="0.6"/>
<svg x="589.3" y="386.6" width="8.1" height="7.6" viewBox="0 0 8.1 7.6"><path d="M2.8 2.5 H5.3 M2.8 3.8 H5.3 M2.8 5.1 H5.3" stroke="#999" stroke-width=".6"/></svg>
<svg x="2.2" y="400" width="2" height="12" viewBox="0 0 2 12"><path d="M1 0 V12" stroke="#a0a0a0" stroke-width=".8" stroke-dasharray=".7 1.1"/></svg>
<text x="9" y="408.14" font-size="6.4" letter-spacing="0.066">Ex</text>
<rect x="254.8" y="399" width="15.2" height="14" fill="#cce4f7"/>
<svg x="22.8" y="401.2" width="9.4" height="9.4" viewBox="0 0 20 20"><rect x="1.5" y="1.5" width="17" height="17" fill="#fff" stroke="#555" stroke-width="1.2"/><rect x="3.2" y="3.2" width="13.6" height="13.6" fill="none" stroke="#ccc" stroke-width=".8"/><circle cx="10" cy="10" r="1.6" fill="#1fa85a"/></svg>
<svg x="37.7" y="401.4" width="9" height="9" viewBox="0 0 20 20"><path d="M10 1 V19 M1 10 H19" stroke="#5a5a5a" stroke-width="1.3"/></svg>
<svg x="52.5" y="401.2" width="9.4" height="9.4" viewBox="0 0 20 20"><circle cx="2.2" cy="2.2" r="1.75" fill="#1fa85a"/><circle cx="2.2" cy="7.4" r="1.75" fill="#1fa85a"/><circle cx="2.2" cy="12.600000000000001" r="1.75" fill="#1fa85a"/><circle cx="2.2" cy="17.8" r="1.75" fill="#1fa85a"/><circle cx="7.4" cy="2.2" r="1.75" fill="#1fa85a"/><circle cx="7.4" cy="7.4" r="1.75" fill="#1fa85a"/><circle cx="7.4" cy="12.600000000000001" r="1.75" fill="#1fa85a"/><circle cx="7.4" cy="17.8" r="1.75" fill="#1fa85a"/><circle cx="12.600000000000001" cy="2.2" r="1.75" fill="#1fa85a"/><circle cx="12.600000000000001" cy="7.4" r="1.75" fill="#1fa85a"/><circle cx="12.600000000000001" cy="12.600000000000001" r="1.75" fill="#1fa85a"/><circle cx="12.600000000000001" cy="17.8" r="1.75" fill="#1fa85a"/><circle cx="17.8" cy="2.2" r="1.75" fill="#1fa85a"/><circle cx="17.8" cy="7.4" r="1.75" fill="#1fa85a"/><circle cx="17.8" cy="12.600000000000001" r="1.75" fill="#1fa85a"/><circle cx="17.8" cy="17.8" r="1.75" fill="#1fa85a"/></svg>
<svg x="67" y="400.7" width="10.4" height="10.4" viewBox="0 0 20 20"><path d="M3.5 3 L17 13.5 M3.5 3 C7 9 11 13 17 13.5" fill="none" stroke="#666" stroke-width="1.2"/><circle cx="3.6" cy="3" r="2.3" fill="#1fa85a"/><circle cx="17" cy="13.4" r="2.3" fill="#1fa85a"/><circle cx="11" cy="17.2" r="2.3" fill="#1fa85a"/></svg>
<svg x="81.8" y="400.7" width="10.4" height="10.4" viewBox="0 0 20 20"><path d="M3 3 L18 15" stroke="#666" stroke-width="1.2"/><circle cx="6.5" cy="2.6" r="2.2" fill="#1fa85a"/><circle cx="2.6" cy="6" r="2.2" fill="#1fa85a"/><circle cx="11" cy="8.4" r="2.2" fill="#1fa85a"/><circle cx="16.6" cy="11" r="2.2" fill="#1fa85a"/><circle cx="11.5" cy="16.5" r="2.2" fill="#1fa85a"/><circle cx="16.5" cy="15" r="2" fill="#1fa85a"/></svg>
<svg x="97" y="400.9" width="10" height="10" viewBox="0 0 20 20"><path d="M3 9 C7 8 10 5 11 1 M9 18 C13 15 16 11 17 6" fill="none" stroke="#555" stroke-width="1.1"/><path d="M7 4 L16 14" stroke="#777" stroke-width=".9"/><circle cx="11.5" cy="8.2" r="2.2" fill="#1fa85a"/><circle cx="3.4" cy="17" r="2.2" fill="#1fa85a"/></svg>
<svg x="112.2" y="401.1" width="9.6" height="9.6" viewBox="0 0 20 20"><path d="M1 6 C6 5 12 9 16 17 M3 3 L19 12" fill="none" stroke="#555" stroke-width="1.1"/><circle cx="10.5" cy="8.4" r="2.6" fill="#1fa85a"/></svg>
<svg x="126.9" y="401.2" width="9.4" height="9.4" viewBox="0 0 20 20"><path d="M1 6 C7 6 12 10 15 18 M4 14 L18 3" fill="none" stroke="#555" stroke-width="1.1" stroke-dasharray="3 1.4"/><circle cx="4.6" cy="6.4" r="2.1" fill="#1fa85a"/><circle cx="10" cy="4.6" r="2.1" fill="#1fa85a"/><circle cx="16" cy="5.6" r="2.1" fill="#1fa85a"/><circle cx="5.4" cy="15" r="2.1" fill="#1fa85a"/><circle cx="12" cy="16" r="2.1" fill="#1fa85a"/></svg>
<svg x="142.5" y="401.9" width="8" height="8" viewBox="0 0 20 20"><path d="M2 2 L18 18 M18 2 L2 18" stroke="#444" stroke-width="1.3"/><circle cx="10" cy="10" r="2.4" fill="#1fa85a"/></svg>
<svg x="159.8" y="401.5" width="8.8" height="8.8" viewBox="0 0 20 20"><path d="M1 10 H19" stroke="#8eecc0" stroke-width="5.6"/><path d="M1 10 H19" stroke="#1fa85a" stroke-width=".9" opacity=".7"/><circle cx="10" cy="10" r="2.4" fill="#1fa85a"/></svg>
<svg x="174" y="400.9" width="10" height="10" viewBox="0 0 20 20"><path d="M10 0 V20" stroke="#8eecc0" stroke-width="5.6"/><path d="M10 0 V20" stroke="#1fa85a" stroke-width=".9" opacity=".7"/><circle cx="10" cy="10" r="2.4" fill="#1fa85a"/></svg>
<svg x="189.3" y="401.4" width="9" height="9" viewBox="0 0 20 20"><path d="M1 10 H19 M10 1 V19" stroke="#8eecc0" stroke-width="5.2"/><path d="M1 10 H19 M10 1 V19" stroke="#1fa85a" stroke-width=".9" opacity=".7"/><circle cx="10" cy="10" r="2.4" fill="#1fa85a"/></svg>
<svg x="206.7" y="401.4" width="9" height="9" viewBox="0 0 20 20"><path d="M3.5 16.5 L10.5 9.5" stroke="#444" stroke-width="6" stroke-linecap="round"/><path d="M3.8 16.2 L10.2 9.8" stroke="#fff" stroke-width="3.6" stroke-linecap="round"/><path d="M14.2 1.0 L15.655999999999999 4.744 L19.4 6.2 L15.655999999999999 7.656000000000001 L14.2 11.4 L12.744 7.656000000000001 L9.0 6.2 L12.744 4.744 Z" fill="#147a40"/></svg>
<svg x="221.8" y="400.9" width="10" height="10" viewBox="0 0 20 20"><rect x="1.5" y="3.6" width="7.6" height="7" rx="1" fill="#111"/><path d="M3.2 4 V2.6 A2.1 2.1 0 0 1 7.4 2.6 V4" fill="none" stroke="#111" stroke-width="1.3"/><path d="M8 17.4 L13 12.4" stroke="#444" stroke-width="5.4" stroke-linecap="round"/><path d="M8.3 17.1 L12.7 12.7" stroke="#fff" stroke-width="3.2" stroke-linecap="round"/><path d="M16 5.6000000000000005 L17.344 9.056000000000001 L20.8 10.4 L17.344 11.744 L16 15.2 L14.656 11.744 L11.2 10.4 L14.656 9.056000000000001 Z" fill="#147a40"/></svg>
<svg x="242.3" y="401.2" width="9.4" height="9.4" viewBox="0 0 20 20"><rect x="1.6" y="2" width="16.8" height="13" rx="1.8" fill="#fff" stroke="#444" stroke-width="1.5"/><path d="M6.6 18.4 H13.4 L12.4 15.6 H7.6 Z" fill="#111"/><rect x="2.8" y="3.3" width="4" height="10.9" fill="#00f07a"/></svg>
<svg x="257.7" y="401.2" width="9.4" height="9.4" viewBox="0 0 20 20"><rect x="1.6" y="2" width="16.8" height="13" rx="1.8" fill="#fff" stroke="#444" stroke-width="1.5"/><path d="M6.6 18.4 H13.4 L12.4 15.6 H7.6 Z" fill="#111"/><rect x="2.8" y="3.3" width="14.4" height="10.9" fill="#a8c8e8"/><rect x="13.2" y="3.3" width="4" height="10.9" fill="#00f07a"/></svg>
<svg x="272.3" y="401.2" width="9.4" height="9.4" viewBox="0 0 20 20"><rect x="1.6" y="2" width="16.8" height="13" rx="1.8" fill="#fff" stroke="#444" stroke-width="1.5"/><path d="M6.6 18.4 H13.4 L12.4 15.6 H7.6 Z" fill="#111"/><rect x="2.8" y="3.3" width="14.4" height="3.6" fill="#00f07a"/></svg>
<svg x="287.3" y="401.2" width="9.4" height="9.4" viewBox="0 0 20 20"><rect x="1.6" y="2" width="16.8" height="13" rx="1.8" fill="#fff" stroke="#444" stroke-width="1.5"/><path d="M6.6 18.4 H13.4 L12.4 15.6 H7.6 Z" fill="#111"/><rect x="2.8" y="10.6" width="14.4" height="3.6" fill="#00f07a"/></svg>
<svg x="301.9" y="401.2" width="9.4" height="9.4" viewBox="0 0 20 20"><rect x="1.6" y="2" width="16.8" height="13" rx="1.8" fill="#fff" stroke="#444" stroke-width="1.5"/><path d="M6.6 18.4 H13.4 L12.4 15.6 H7.6 Z" fill="#111"/><ellipse cx="10" cy="8.2" rx="4" ry="3" fill="#00f07a"/></svg>
<svg x="321.8" y="400.9" width="10" height="10" viewBox="0 0 20 20"><path d="M5 4.4 L6.568 8.432 L10.6 10 L6.568 11.568 L5 15.6 L3.432 11.568 L-0.5999999999999996 10 L3.432 8.432 Z" fill="#000"/><rect x="10.5" y="1.5" width="8" height="17" fill="#d8d8d8" stroke="#aaa" stroke-width=".9"/><path d="M12 6 H17 M12 10 H17 M12 14 H17" stroke="#fff" stroke-width="1.2"/></svg>
<svg x="337.4" y="400.9" width="10" height="10" viewBox="0 0 20 20"><path d="M5 4.4 L6.568 8.432 L10.6 10 L6.568 11.568 L5 15.6 L3.432 11.568 L-0.5999999999999996 10 L3.432 8.432 Z" fill="#000"/><rect x="10.5" y="1.5" width="8" height="17" fill="#d8d8d8" stroke="#aaa" stroke-width=".9"/><rect x="15" y="1.5" width="3.5" height="17" fill="#00f07a" opacity=".7"/><path d="M12 6 H15 M12 10 H15 M12 14 H15" stroke="#fff" stroke-width="1.2"/></svg>
<rect x="154.7" y="400" width="0.6" height="12" fill="#dedede"/>
<rect x="202.7" y="400" width="0.6" height="12" fill="#dedede"/>
<svg x="236.6" y="400" width="2" height="12" viewBox="0 0 2 12"><path d="M1 0 V12" stroke="#a0a0a0" stroke-width=".8" stroke-dasharray=".7 1.1"/></svg>
<svg x="316.6" y="400" width="2" height="12" viewBox="0 0 2 12"><path d="M1 0 V12" stroke="#a0a0a0" stroke-width=".8" stroke-dasharray=".7 1.1"/></svg>
<text x="3.6" y="425.23" font-size="6.07">171.7500 , -6.0000</text>
<text x="3.6" y="438.74" font-size="6.11">171.8548 &lt; 357.9992°</text>
<rect x="92.5" y="416.5" width="0.6" height="27.5" fill="#dddddd"/>
<rect x="184.3" y="416.5" width="0.6" height="27.5" fill="#dddddd"/>
<rect x="331.2" y="416.5" width="0.6" height="27.5" fill="#dddddd"/>
<rect x="409.1" y="416.5" width="0.6" height="27.5" fill="#dddddd"/>
<rect x="486.4" y="416.5" width="0.6" height="27.5" fill="#dddddd"/>
<rect x="515.9" y="416.5" width="0.6" height="27.5" fill="#dddddd"/>
<svg x="96" y="420.1" width="6" height="6" viewBox="0 0 6 6"><circle cx="3" cy="3" r="2.7" fill="#7a7a7a"/><circle cx="3" cy="3" r="1.1" fill="none" stroke="#f0f0f0" stroke-width=".6"/></svg>
<svg x="96" y="433.6" width="6" height="6" viewBox="0 0 6 6"><circle cx="3" cy="3" r="2.7" fill="#7a7a7a"/><circle cx="3" cy="3" r="1.1" fill="none" stroke="#f0f0f0" stroke-width=".6"/></svg>
<text x="105.6" y="425.23" font-size="6.07">171.7500 , -6.0000</text>
<text x="105.6" y="438.74" font-size="6.11">171.8548 &lt; 357.9992°</text>
<svg x="245" y="416" width="28" height="29" viewBox="245 416 28 29"><path d="M246.8 424.6 C249 427.2 251.6 427.6 253.2 424 C254.6 420.4 255.2 417.6 259 417.6 C262.6 417.6 263 420.6 263.2 423.4" fill="none" stroke="#111" stroke-width=".95"/><rect x="256.3" y="423.1" width="14.5" height="20.9" rx="3.2" fill="#fff" stroke="#111" stroke-width="1.15"/><path d="M256.2 431.6 H270.6 M261.2 423.6 V431.6 M265.4 423.6 V431.6" stroke="#111" stroke-width=".8" fill="none"/><rect x="261.5" y="424" width="3.6" height="7.2" fill="#00f07a"/></svg>
<text x="333.9" y="424.9" font-size="6" font-weight="500" letter-spacing="-0.158">选择</text>
<text x="334" y="438.07" font-size="6.5">0</text>
<text x="371.3" y="424.9" font-size="6" font-weight="500" letter-spacing="-0.258">总长</text>
<text x="371.6" y="438.07" font-size="6.5">0</text>
<text x="411.5" y="424.9" font-size="6" font-weight="500" letter-spacing="-0.254">当前图层</text>
<text x="411.6" y="438.07" font-size="6.5">0</text>
<text x="490.5" y="424.9" font-size="6" font-weight="500" letter-spacing="-0.354">网格状态</text>
<text x="490.6" y="437.97" font-size="6.2">10 / 100</text>
<svg x="592" y="437" width="8" height="8" viewBox="0 0 8 8"><path d="M7 3 L3 7 M7 5 L5 7" stroke="#bdbdbd" stroke-width=".7"/></svg>
<rect x="598.1" y="398" width="0.7" height="45.8" fill="#fafafa"/>
<rect x="0" y="0" width="600" height="0.7" fill="#9a9a9a"/>
<rect x="0" y="0" width="0.9" height="445" fill="#a0a0a0"/>
<rect x="598.8" y="0" width="1.2" height="445" fill="#b0b0b0"/>
<rect x="0" y="443.8" width="600" height="1.2" fill="#b0b0b0"/>
</svg>
</body>
</html>
